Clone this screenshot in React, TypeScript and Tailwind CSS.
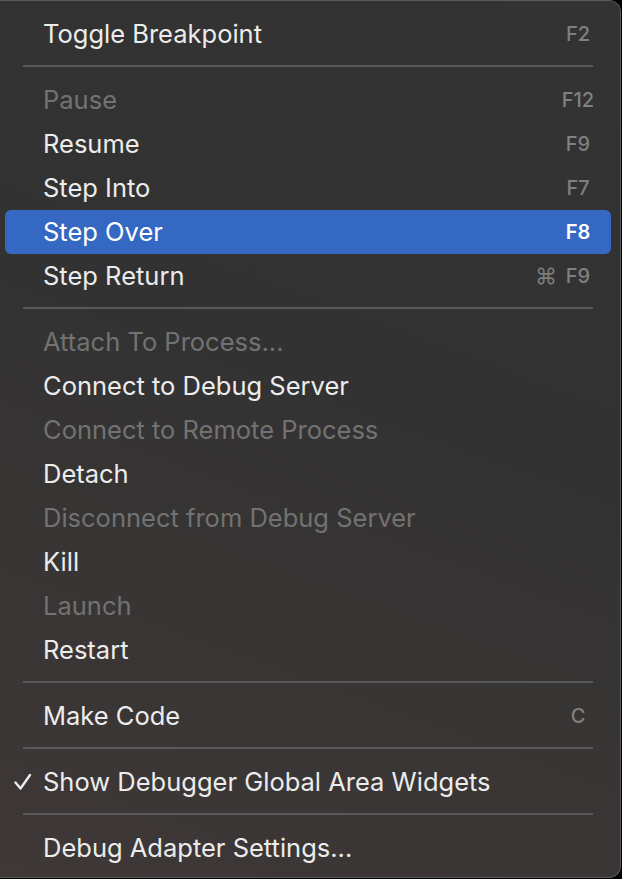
import React from "react";

type Item =
  | { type: "sep" }
  | {
      type: "item";
      label: string;
      disabled?: boolean;
      active?: boolean;
      checked?: boolean;
      mod?: string;
      key?: string;
    };

const items: Item[] = [
  { type: "item", label: "Toggle Breakpoint", key: "F2" },
  { type: "sep" },
  { type: "item", label: "Pause", disabled: true, key: "F12" },
  { type: "item", label: "Resume", key: "F9" },
  { type: "item", label: "Step Into", key: "F7" },
  { type: "item", label: "Step Over", key: "F8", active: true },
  { type: "item", label: "Step Return", mod: "⌘", key: "F9" },
  { type: "sep" },
  { type: "item", label: "Attach To Process...", disabled: true },
  { type: "item", label: "Connect to Debug Server" },
  { type: "item", label: "Connect to Remote Process", disabled: true },
  { type: "item", label: "Detach" },
  { type: "item", label: "Disconnect from Debug Server", disabled: true },
  { type: "item", label: "Kill" },
  { type: "item", label: "Launch", disabled: true },
  { type: "item", label: "Restart" },
  { type: "sep" },
  { type: "item", label: "Make Code", key: "C" },
  { type: "sep" },
  { type: "item", label: "Show Debugger Global Area Widgets", checked: true },
  { type: "sep" },
  { type: "item", label: "Debug Adapter Settings..." },
];

export default function App() {
  return (
    <div
      className="w-[622px] h-[879px] bg-black overflow-hidden"
      style={{ fontFamily: "Inter, 'Noto Sans', sans-serif" }}
    >
      <div className="w-[621px] h-[878px] rounded-r-[12px] border-y border-r border-[#5a5a5a] bg-[linear-gradient(200deg,#333333_0%,#333232_45%,#3e3837_100%)] pt-[11px]">
        {items.map((it, i) =>
          it.type === "sep" ? (
            <div key={i} className="h-[22px] pt-[9px]">
              <div className="ml-[23px] w-[570px] h-[2px] bg-[#585858]" />
            </div>
          ) : (
            <div
              key={i}
              className={
                "relative ml-[5px] w-[606px] h-[44px] flex items-center pl-[38px] pr-[13px] rounded-[6px] " +
                (it.active ? "bg-[#3468c3]" : "")
              }
            >
              {it.checked && (
                <svg
                  className="absolute left-[9px] top-[13px]"
                  width="18"
                  height="18"
                  viewBox="0 0 18 18"
                  fill="none"
                >
                  <path
                    d="M1.5 9.5 L6.5 15.5 L16 2"
                    stroke="#ececec"
                    strokeWidth="2.4"
                    strokeLinecap="round"
                    strokeLinejoin="round"
                  />
                </svg>
              )}
              <span
                className={
                  "flex-1 text-[25.5px] tracking-normal leading-none " +
                  (it.disabled
                    ? "text-[#727272]"
                    : it.active
                    ? "text-white"
                    : "text-[#ececec]")
                }
              >
                {it.label}
              </span>
              {it.mod && (
                <span className="text-[22px] leading-none text-[#7c7c7c] mr-[1px]">
                  {it.mod}
                </span>
              )}
              {it.key && (
                <span
                  className={
                    "w-[40px] text-center text-[20px] font-medium leading-none " +
                    (it.active ? "text-white font-semibold" : "text-[#808080]")
                  }
                >
                  {it.key}
                </span>
              )}
            </div>
          )
        )}
      </div>
    </div>
  );
}
